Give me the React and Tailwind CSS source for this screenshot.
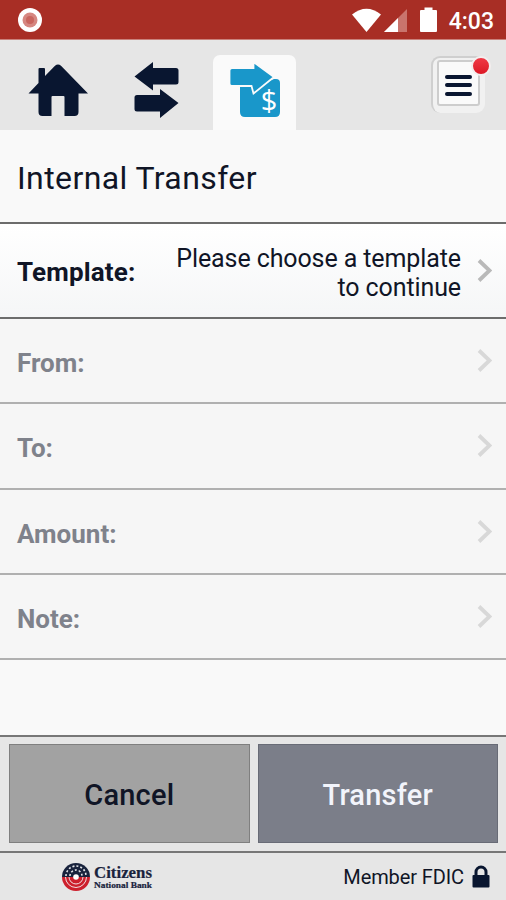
import React from 'react';

const rows = ['From:', 'To:', 'Amount:', 'Note:'];

const Chevron = ({ className }) => (
  <svg width="15" height="23" viewBox="0 0 15 23" fill="none" className={className}>
    <path d="M2 1.500 L12.500 11.500 L2 21.500" stroke="currentColor" strokeWidth="3.8" />
  </svg>
);

const StatusBar = () => (
  <div className="h-10 bg-[#a82e25] border-b border-[#c9827c] flex items-center justify-between pl-[18px] pr-3 shrink-0">
    <svg width="24" height="24" viewBox="0 0 24 24">
      <circle cx="12" cy="12" r="12" fill="#fff" />
      <circle cx="12" cy="12" r="7.5" fill="#d68781" />
      <circle cx="12" cy="12" r="4" fill="#c9655e" />
    </svg>
    <div className="flex items-center">
      <svg width="88" height="26" viewBox="0 0 88 26" className="mr-[9px]">
        <path d="M0 7.500 Q14.500 -4 29 7.500 L14.500 25 Z" fill="#fff" />
        <path d="M32 25 L55 2 V25 Z" fill="#c9746d" />
        <path d="M32 25 L46 11 V25 Z" fill="#fff" />
        <path d="M69 3 h3.500 v-2.500 h8 v2.500 h3.500 q1 0 1 1 v20 q0 1 -1 1 h-15 q-1 0 -1 -1 v-20 q0 -1 1 -1 Z" fill="#fff" />
      </svg>
      <span className="text-white text-[23px] font-medium leading-none pt-[3px]">4:03</span>
    </div>
  </div>
);

const NavBar = () => (
  <div className="h-[90px] bg-[#e6e6e6] flex shrink-0">
    <svg width="60" height="53" viewBox="0 0 60 53" className="ml-7 mt-6 text-[#091630]">
      <path d="M10.500 5 q0 -1 1 -1 h4.500 q1 0 1 1 v7 L27 1.800 q3 -2.500 6 0 L60 29.500 H50.500 V48 q0 4 -4 4 H36.500 V33 q0 -1 -1 -1 H24.500 q-1 0 -1 1 V52 H14.500 q-4 0 -4 -4 V29.500 H0.500 L10.500 19 Z" fill="currentColor" />
    </svg>
    <svg width="45" height="56" viewBox="0 0 45 56" className="ml-[46px] mt-[22px] text-[#091630]">
      <path d="M0.500 14.500 L19 0 V6 H42 q2.500 0 2.500 2.500 V20 q0 2.500 -2.500 2.500 H19 V28.500 Z" fill="currentColor" />
      <path d="M44.500 41 L26 27 V33 H3 q-2.500 0 -2.500 2.500 V47 q0 2.500 2.500 2.500 H26 V56 Z" fill="currentColor" />
    </svg>
    <div className="ml-[34px] mt-[15px] w-[83px] h-[75px] bg-[#fafafa] rounded-t-[7px]">
      <svg width="52" height="56" viewBox="0 0 52 56" className="ml-4 mt-[7px]">
        <path d="M11 20 L26 25 L45 17 H47 q4 0 4 4 V50 q0 5 -5 5 H16 q-5 0 -5 -5 Z" fill="#1997ca" />
        <path d="M3 6 H24.500 V0 L45 15 L24.500 31.500 L22.500 24 H3 q-2.500 0 -2.500 -2.500 V8.500 Q0.500 6 3 6 Z" fill="#1997ca" stroke="#fafafa" strokeWidth="1.800" />
        <text x="40" y="48.500" textAnchor="middle" fontSize="29" fontFamily="Open Sans, sans-serif" fill="#fff">$</text>
      </svg>
    </div>
    <div className="relative ml-auto mr-[21px] mt-4 w-[54px] h-[57px] rounded-[9px] bg-[#f1f1f1] border-t-2 border-l-2 border-[#cfcfcf]">
      <div className="ml-1 mt-[2px] w-[43px] h-[46px] rounded-[3px] bg-[#fafafa] border-2 border-[#cdcdcd] flex flex-col items-center justify-center gap-[4.500px] pt-1">
        <div className="w-[27px] h-1 rounded-sm bg-[#091630]" />
        <div className="w-[27px] h-1 rounded-sm bg-[#091630]" />
        <div className="w-[27px] h-1 rounded-sm bg-[#091630]" />
      </div>
      <div className="absolute top-[-2px] right-[-6px] w-5 h-5 rounded-full bg-linear-to-b from-[#f03845] to-[#dc1624] border-2 border-[#f3eeee]" />
    </div>
  </div>
);

const BankLogo = () => (
  <div className="flex items-center gap-1 ml-[62px]">
    <svg width="28" height="28" viewBox="0 0 28 28">
      <path d="M0 14 A14 14 0 0 1 28 14 Z" fill="#19233d" />
      <path d="M0 14 A14 14 0 0 0 28 14 Z" fill="#cd202d" />
      <g fill="none" stroke="#f1dfe1" strokeWidth="1">
        <path d="M3.500 14 A10.500 10.500 0 0 0 24.500 14" />
        <path d="M7 14 A7 7 0 0 0 21 14" />
      </g>
      <g fill="none" stroke="#e5e7eb" strokeWidth="1.600" strokeDasharray="2 2">
        <path d="M4 13 A10 10 0 0 1 24 13" />
        <path d="M8 13 A6 6 0 0 1 20 13" />
      </g>
      <circle cx="14" cy="14" r="2.800" fill="#fff" />
    </svg>
    <svg width="64" height="47" viewBox="0 0 64 47" fontWeight="bold" fill="#19233d" stroke="#19233d" strokeWidth="0.200" fontFamily="Liberation Serif, serif" className="overflow-visible">
      <text x="0" y="25" fontSize="17" textLength="58" lengthAdjust="spacingAndGlyphs">Citizens</text>
      <text x="0" y="35" fontSize="8.500" textLength="58" lengthAdjust="spacingAndGlyphs">National Bank</text>
    </svg>
  </div>
);

export default function App() {
  return (
    <div className="w-[506px] h-[900px] flex flex-col bg-[#f9f9f9] font-[Roboto,sans-serif] text-[#101526] overflow-hidden">
      <StatusBar />
      <NavBar />

      <div className="h-[92px] shrink-0 flex items-center px-[17px]">
        <h1 className="text-[32px] leading-none tracking-[0.4px] pt-1">Internal Transfer</h1>
      </div>

      <div className="h-[97px] shrink-0 border-y-2 border-[#6c6c6c] bg-linear-to-b from-white to-[#f5f6f7] flex items-center pl-[17px] pr-[14px]">
        <span className="text-[26px] font-bold tracking-[0.15px] pt-[3px]">Template:</span>
        <span className="ml-auto w-[300px] text-right text-[25px] tracking-[-0.1px] leading-[29px] pt-1">Please choose a template<br />to continue</span>
        <Chevron className="ml-4 text-[#b9b9b9]" />
      </div>

      {rows.map((label) => (
        <div key={label} className="h-[85.3px] shrink-0 border-b-2 border-[#b0b0b0] bg-[#f6f6f6] flex items-center justify-between pl-[17px] pr-[14px]">
          <span className="text-[26px] font-bold text-[#7f828b] pt-[6px]">{label}</span>
          <Chevron className="text-[#d8d8d8]" />
        </div>
      ))}

      <div className="mt-auto h-[118px] shrink-0 border-y-2 border-[#777] bg-[#e6e6e6] flex gap-2 pl-[9px] pr-2 pt-[7px] pb-2">
        <button className="flex-1 bg-[#a2a2a2] border border-[#7f7f7f] text-[29px] font-medium tracking-[0.2px] pt-[4px]">Cancel</button>
        <button className="flex-1 bg-[#7b7e89] border border-[#686b76] text-[29px] font-medium tracking-[0.2px] pt-[4px] text-[#f2f4fb]">Transfer</button>
      </div>

      <div className="h-[47px] shrink-0 bg-[#e6e6e6] flex items-center justify-between pr-[16px]">
        <BankLogo />
        <div className="flex items-center gap-2">
          <span className="text-[20px] tracking-[-0.1px]">Member FDIC</span>
          <svg width="18" height="23" viewBox="0 0 18 23">
            <path d="M4 11 V7 a5 5 0 0 1 10 0 V11" fill="none" stroke="#091630" strokeWidth="3" />
            <rect x="0.500" y="10" width="17" height="12.500" rx="1" fill="#091630" />
          </svg>
        </div>
      </div>
    </div>
  );
}
